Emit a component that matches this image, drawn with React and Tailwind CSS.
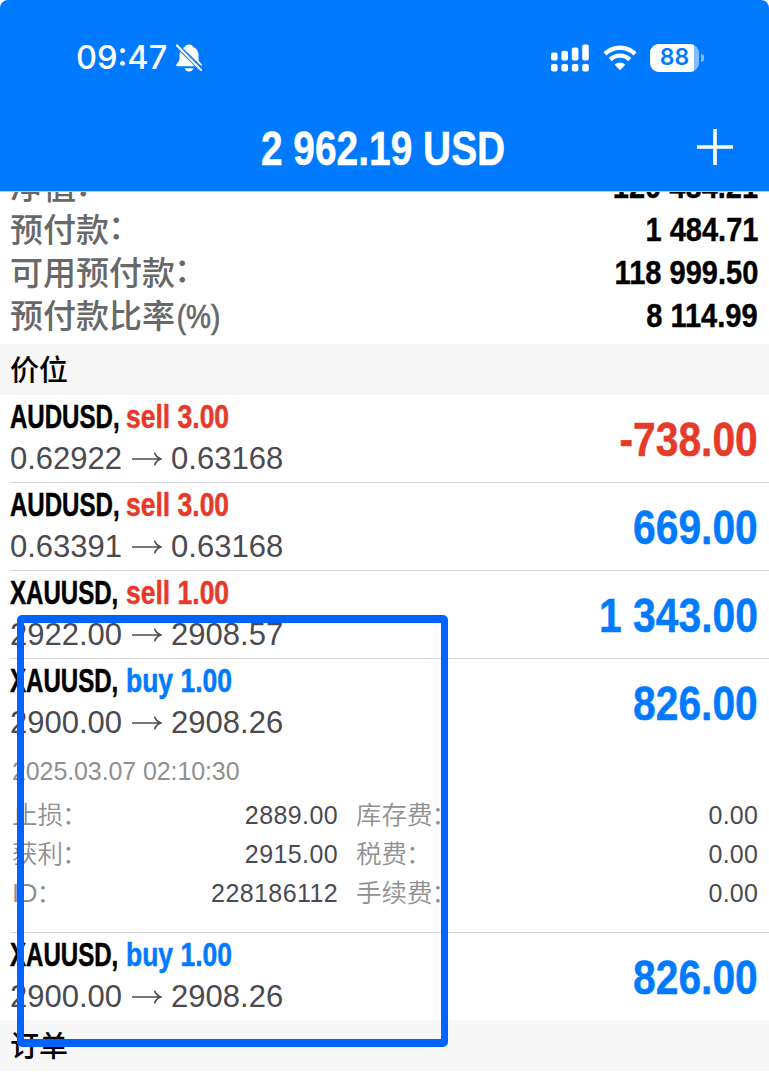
import React from 'react'

const account = [
  { label: '净值', value: '120 484.21' },
  { label: '预付款', value: '1 484.71' },
  { label: '可用预付款', value: '118 999.50' },
  { label: '预付款比率', suffix: '(%)', value: '8 114.99' }
]

const positions = [
  { id: 1, symbol: 'AUDUSD', side: 'sell', volume: '3.00', open: '0.62922', current: '0.63168', profit: '-738.00' },
  { id: 2, symbol: 'AUDUSD', side: 'sell', volume: '3.00', open: '0.63391', current: '0.63168', profit: '669.00' },
  { id: 3, symbol: 'XAUUSD', side: 'sell', volume: '1.00', open: '2922.00', current: '2908.57', profit: '1 343.00' },
  {
    id: 4,
    symbol: 'XAUUSD',
    side: 'buy',
    volume: '1.00',
    open: '2900.00',
    current: '2908.26',
    profit: '826.00',
    details: {
      time: '2025.03.07 02:10:30',
      rows: [
        ['止损', '2889.00', '库存费', '0.00'],
        ['获利', '2915.00', '税费', '0.00'],
        ['ID', '228186112', '手续费', '0.00']
      ]
    }
  },
  { id: 5, symbol: 'XAUUSD', side: 'buy', volume: '1.00', open: '2900.00', current: '2908.26', profit: '826.00' }
]

function BellOff() {
  return (
    <svg width="28" height="30" viewBox="0 0 28 30" className="ml-[8px]">
      <path
        d="M14 1.500c-2.300 0-3.800 1.100-4.300 2.500C6.100 5.400 4.500 8.600 4.500 12v3c0 2.400-.9 4-2.400 5.400-1.400 1.300-1.200 2.900.6 2.900h22.600c1.800 0 2-1.600.6-2.900-1.500-1.400-2.400-3-2.400-5.400V12c0-3.400-1.600-6.600-5.200-8C17.800 2.600 16.300 1.500 14 1.500z"
        fill="#fff"
      />
      <path d="M9.600 25.200h8.800c-.6 2-2.200 3.300-4.400 3.300s-3.800-1.300-4.400-3.300z" fill="#fff" />
      <path d="M0 0.500l28 27.500" stroke="#007aff" strokeWidth="4.600" />
      <path d="M2 2.500l24 24.400" stroke="#fff" strokeWidth="2.200" strokeLinecap="round" />
    </svg>
  )
}

function Signal() {
  return (
    <svg width="38" height="28" viewBox="0 0 38 28" fill="#fff">
      <rect x="0" y="8.500" width="6.600" height="8" rx="2" />
      <rect x="10.400" y="6.700" width="6.600" height="9.800" rx="2" />
      <rect x="20.800" y="3.600" width="6.600" height="12.900" rx="2" />
      <rect x="31.200" y="0.500" width="6.600" height="16" rx="2" />
      <rect x="0" y="20" width="6.600" height="7.500" rx="2" />
      <rect x="10.400" y="20" width="6.600" height="7.500" rx="2" />
      <rect x="20.800" y="20" width="6.600" height="7.500" rx="2" />
      <rect x="31.200" y="20" width="6.600" height="7.500" rx="2" />
    </svg>
  )
}

function Wifi() {
  return (
    <svg width="34" height="26" viewBox="0 0 34 26" className="ml-[14px]">
      <g fill="none" stroke="#fff" strokeWidth="4.400">
        <path d="M1.900 8.900a21.600 21.600 0 0 1 30.200 0" />
        <path d="M7.300 14.600a13.900 13.900 0 0 1 19.400 0" />
      </g>
      <path d="M17 25.200l-5.300-5.500a7.500 7.500 0 0 1 10.600 0z" fill="#fff" />
    </svg>
  )
}

function Battery({ level }) {
  return (
    <div className="ml-[13px] flex items-center">
      <div className="flex h-[28px] w-[49px] overflow-hidden rounded-[9px] bg-[#80bdff]">
        <div className="flex w-[44px] items-center justify-center bg-white pl-[5px] font-['Inter',sans-serif] text-[23px] leading-none font-semibold text-[#007aff]">
          {level}
        </div>
      </div>
      <div className="ml-[2px] h-[8px] w-[3px] rounded-r-full bg-[#80bdff]" />
    </div>
  )
}

function Header() {
  return (
    <header className="h-[191px] rounded-t-[8px] bg-[#007aff] text-white">
      <div className="flex h-[115px] items-center pr-[65px] pl-[76px]">
        <span className="pt-[2px] font-['Inter',sans-serif] text-[32.500px] leading-none font-[550]">09:47</span>
        <BellOff />
        <div className="ml-auto flex items-center">
          <Signal />
          <Wifi />
          <Battery level="88" />
        </div>
      </div>
      <div className="grid h-[66px] grid-cols-[1fr_auto_1fr] items-center">
        <h1 className="col-start-2 scale-x-[0.81] pr-[3px] text-[48px] leading-[68px] font-bold whitespace-nowrap [-webkit-text-stroke:0.5px_currentColor]">
          2 962.19 USD
        </h1>
        <svg width="36" height="36" viewBox="0 0 36 36" className="mr-[36px] mb-[4px] justify-self-end">
          <path d="M18 0v36M0 18h36" stroke="#fff" strokeWidth="3.600" />
        </svg>
      </div>
    </header>
  )
}

function SectionTitle({ children }) {
  return (
    <div className="flex h-[51px] items-center bg-[#f7f7f7] pt-[4px] pl-[10px] text-[29px] leading-none font-medium text-black">
      {children}
    </div>
  )
}

function Colon() {
  return <span className="mb-[6px] -ml-px">：</span>
}

function Arrow() {
  return (
    <svg width="30" height="14" viewBox="0 0 30 14" className="mr-[9px] ml-[10px]" fill="none" stroke="#4a4a50" strokeWidth="1.700">
      <path d="M0 7h28.500M22.500 0.800c1.200 3 3.300 5.200 6.300 6.200-3 1-5.100 3.200-6.300 6.200" />
    </svg>
  )
}

function Details({ details }) {
  return (
    <div className="pr-[11px] pb-[20px] pl-[12px] text-[25px] font-[350] text-[#909090]">
      <div className="mt-[5px] mb-[5px] flex h-[39px] items-center tracking-[-0.1px]">{details.time}</div>
      {details.rows.map(([label, value, costLabel, cost]) => (
        <div key={label} className="grid h-[39px] grid-cols-[326px_1fr] items-center">
          <div className="flex items-center justify-between">
            <span className="flex text-[25.500px]">
              {label}
              <Colon />
            </span>
            <span className="pb-[4px] tracking-[0.4px] text-[#4a4a50]">{value}</span>
          </div>
          <div className="flex items-center justify-between pl-[18px]">
            <span className="flex text-[25.500px]">
              {costLabel}
              <Colon />
            </span>
            <span className="pb-[4px] tracking-[0.2px] text-[#4a4a50]">{cost}</span>
          </div>
        </div>
      ))}
    </div>
  )
}

function Position({ item, last }) {
  return (
    <div className={last ? '-mb-px' : 'relative after:absolute after:right-0 after:bottom-0 after:left-[10px] after:h-px after:bg-[#d4d4d8]'}>
      <div className="flex h-[88px] items-center justify-between pr-[11px] pl-[10px]">
        <div className="flex h-full flex-col pt-[4px]">
          <div className="flex h-[36px] text-[32.500px] leading-[36px] font-bold whitespace-nowrap text-black [-webkit-text-stroke:0.5px_currentColor]">
            <div className="w-[116px]">
              <div className="origin-left scale-x-[0.74]">{item.symbol},</div>
            </div>
            <div className={`origin-left scale-x-[0.815] ${item.side === 'sell' ? 'text-[#e63b2a]' : 'text-[#007aff]'}`}>
              {item.side} {item.volume}
            </div>
          </div>
          <div className="mt-[6px] flex h-[36px] items-center text-[31px] leading-[36px] text-[#4a4a50]">
            {item.open}
            <Arrow />
            {item.current}
          </div>
        </div>
        <div
          className={`mt-[2px] origin-right scale-x-[0.85] text-[48px] leading-none font-bold whitespace-nowrap [-webkit-text-stroke:0.5px_currentColor] ${
            item.profit.startsWith('-') ? 'text-[#e63b2a]' : 'text-[#007aff]'
          }`}
        >
          {item.profit}
        </div>
      </div>
      {item.details && <Details details={item.details} />}
    </div>
  )
}

export default function App() {
  return (
    <div className="relative h-[1079px] w-[769px] overflow-hidden bg-white font-['Liberation_Sans','Noto_Sans_CJK_SC',sans-serif]">
      <Header />

      {/* Account summary, scrolled partly under the header */}
      <div className="h-[153px] overflow-hidden border-t border-[#a6d1ff]">
        <div className="-mt-[26px]">
          {account.map(row => (
            <div key={row.label} className="flex h-[43px] items-center justify-between pr-[11px] pl-[10px]">
              <div className="flex items-center text-[33px] leading-none font-medium text-[#686868]">
                {row.label}
                {row.suffix ? (
                  <span className="origin-left scale-x-[0.85] pl-[2px] [-webkit-text-stroke:0.7px_currentColor]">
                    {row.suffix}
                  </span>
                ) : (
                  <Colon />
                )}
              </div>
              <div className="mb-[2px] origin-right scale-x-[0.88] text-[33px] leading-none font-bold text-black [-webkit-text-stroke:0.4px_currentColor]">
                {row.value}
              </div>
            </div>
          ))}
        </div>
      </div>

      <SectionTitle>价位</SectionTitle>
      {positions.map((item, index) => (
        <Position key={item.id} item={item} last={index === positions.length - 1} />
      ))}
      <SectionTitle>订单</SectionTitle>

      {/* Highlight frame */}
      <div className="absolute top-[615px] left-[17px] h-[432px] w-[431px] rounded-[5px] border-x-[7px] border-y-[8px] border-[#0062ff]" />
    </div>
  )
}
